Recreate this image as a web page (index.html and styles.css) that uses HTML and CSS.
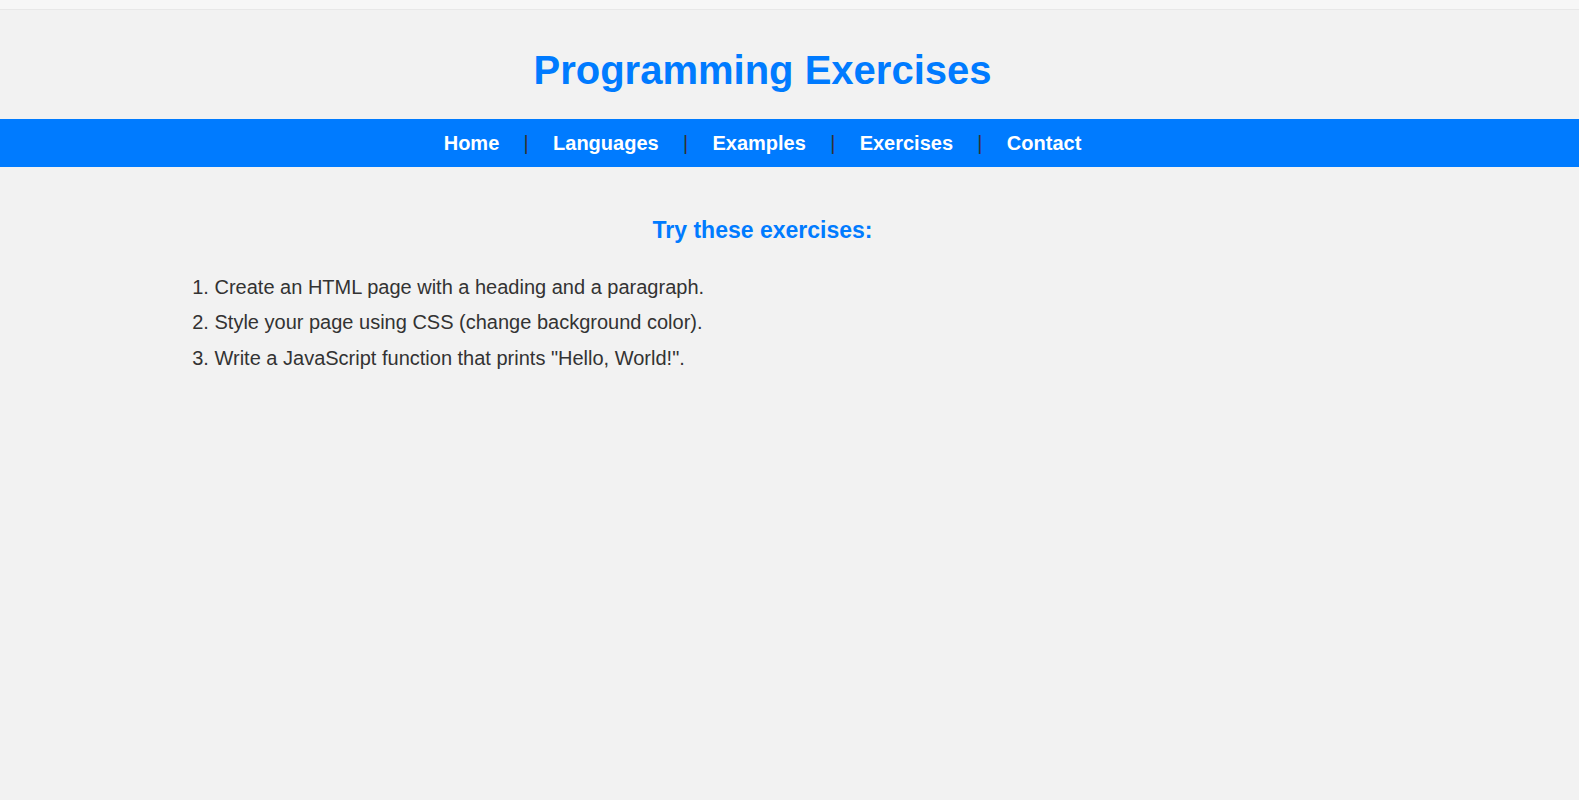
FILE: index.html
```html
<!DOCTYPE html>
<html lang="en">
<head>
<meta charset="utf-8">
<title>Programming Exercises</title>
<link rel="stylesheet" href="styles.css">
</head>
<body>
  <div class="topbar"></div>
  <header class="site-header">
    <h1 class="site-title">Programming Exercises</h1>
  </header>
  <nav class="site-nav">
    <div class="nav-inner">
      <a class="nav-link" href="#">Home</a>
      <span class="nav-sep">|</span>
      <a class="nav-link" href="#">Languages</a>
      <span class="nav-sep">|</span>
      <a class="nav-link" href="#">Examples</a>
      <span class="nav-sep">|</span>
      <a class="nav-link" href="#">Exercises</a>
      <span class="nav-sep">|</span>
      <a class="nav-link" href="#">Contact</a>
    </div>
  </nav>
  <main class="main">
    <section class="content">
      <h2 class="section-title">Try these exercises:</h2>
      <ol class="exercise-list">
        <li>Create an HTML page with a heading and a paragraph.</li>
        <li>Style your page using CSS (change background color).</li>
        <li>Write a JavaScript function that prints "Hello, World!".</li>
      </ol>
    </section>
  </main>
</body>
</html>
```

FILE: styles.css
```css
html, body {
  margin: 0;
  padding: 0;
}

body {
  background: #f2f2f2;
  font-family: "Liberation Sans", Arial, sans-serif;
  color: #333;
  min-height: 800px;
}

.topbar {
  height: 9px;
  background: #f7f7f7;
  border-bottom: 1px solid #e8e8e8;
}

.site-header {
  padding: 37px 54px 26px 0;
  text-align: center;
}

.site-title {
  margin: 0;
  font-size: 40px;
  line-height: 46px;
  font-weight: bold;
  color: #007bff;
}

.site-nav {
  background: #007bff;
  padding: 13px 54px 12px 0;
}

.nav-inner {
  display: flex;
  justify-content: center;
  align-items: baseline;
  gap: 24.3px;
  font-size: 20px;
  line-height: 23px;
}

.nav-link {
  color: #fff;
  font-weight: bold;
  text-decoration: none;
}

.nav-sep {
  color: #333;
}

.main {
  padding: 50px 54px 0 0;
}

.content {
  max-width: 1176px;
  margin: 0 auto;
}

.section-title {
  margin: 0 0 32px;
  text-align: center;
  font-size: 23px;
  line-height: 26.5px;
  font-weight: bold;
  color: #007bff;
}

.exercise-list {
  margin: 0;
  padding-left: 40px;
  font-size: 20px;
  line-height: 23px;
  color: #333;
}

.exercise-list li {
  margin-bottom: 12.8px;
}
```
